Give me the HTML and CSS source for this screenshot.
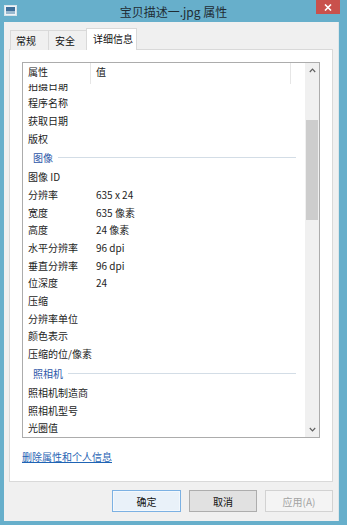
FILE: index.html
```html
<!DOCTYPE html>
<html lang="zh-CN">
<head>
<meta charset="utf-8">
<title>宝贝描述一.jpg 属性</title>
<link rel="stylesheet" href="styles.css">
</head>
<body>
<div class="window">
  <div class="titlebar">
    <div class="tb-left">
      <svg class="app-icon" width="13" height="11" viewBox="0 0 13 11">
        <rect x="0.5" y="0.5" width="12" height="10" fill="#eef4f8" stroke="#d8e4ea"/>
        <rect x="2" y="2" width="9" height="4" fill="#3f6f9a"/>
        <rect x="2" y="6" width="9" height="3" fill="#9ab9cf"/>
      </svg>
    </div>
    <div class="title">宝贝描述一.jpg 属性</div>
    <div class="tb-right">
      <div class="close">
        <svg width="8" height="7" viewBox="0 0 8 7"><path d="M1 0.5 L7 6.5 M7 0.5 L1 6.5" stroke="#fff" stroke-width="1.6"/></svg>
      </div>
    </div>
  </div>
  <div class="client">
    <div class="tabs">
      <div class="tab t1">常规</div>
      <div class="tab t2">安全</div>
      <div class="tab active">详细信息</div>
    </div>
    <div class="panel">
      <div class="listbox">
        <div class="listmain">
          <div class="lhead">
            <div class="hc c1">属性</div>
            <div class="hc c2">值</div>
            <div class="hc c3"></div>
          </div>
          <div class="lview">
            <div class="rows">
              <div class="row"><span class="k">拍摄日期</span><span class="v"></span></div>
              <div class="row"><span class="k">程序名称</span><span class="v"></span></div>
              <div class="row"><span class="k">获取日期</span><span class="v"></span></div>
              <div class="row"><span class="k">版权</span><span class="v"></span></div>
              <div class="sect"><span class="st">图像</span><span class="sl"></span></div>
              <div class="row"><span class="k">图像 ID</span><span class="v"></span></div>
              <div class="row"><span class="k">分辨率</span><span class="v">635 x 24</span></div>
              <div class="row"><span class="k">宽度</span><span class="v">635 像素</span></div>
              <div class="row"><span class="k">高度</span><span class="v">24 像素</span></div>
              <div class="row"><span class="k">水平分辨率</span><span class="v">96 dpi</span></div>
              <div class="row"><span class="k">垂直分辨率</span><span class="v">96 dpi</span></div>
              <div class="row"><span class="k">位深度</span><span class="v">24</span></div>
              <div class="row"><span class="k">压缩</span><span class="v"></span></div>
              <div class="row"><span class="k">分辨率单位</span><span class="v"></span></div>
              <div class="row"><span class="k">颜色表示</span><span class="v"></span></div>
              <div class="row"><span class="k">压缩的位/像素</span><span class="v"></span></div>
              <div class="sect"><span class="st">照相机</span><span class="sl"></span></div>
              <div class="row"><span class="k">照相机制造商</span><span class="v"></span></div>
              <div class="row"><span class="k">照相机型号</span><span class="v"></span></div>
              <div class="row"><span class="k">光圈值</span><span class="v"></span></div>
            </div>
          </div>
        </div>
        <div class="vscroll">
          <div class="arrow">
            <svg width="7" height="5" viewBox="0 0 7 5"><path d="M0.8 4 L3.5 1.2 L6.2 4" fill="none" stroke="#606060" stroke-width="1.2"/></svg>
          </div>
          <div class="track">
            <div class="thumb"></div>
          </div>
          <div class="arrow">
            <svg width="7" height="5" viewBox="0 0 7 5"><path d="M0.8 1 L3.5 3.8 L6.2 1" fill="none" stroke="#606060" stroke-width="1.2"/></svg>
          </div>
        </div>
      </div>
      <a class="link" href="#">删除属性和个人信息</a>
    </div>
    <div class="buttons">
      <div class="btn default">确定</div>
      <div class="btn">取消</div>
      <div class="btn disabled">应用(A)</div>
    </div>
  </div>
</div>
</body>
</html>
```

FILE: styles.css
```css
* { box-sizing: border-box; }
html, body {
  margin: 0;
  padding: 0;
}
body {
  width: 347px;
  height: 525px;
  overflow: hidden;
  background: #67afcb;
  font-family: "Noto Sans CJK SC", "Microsoft YaHei", "Noto Sans", sans-serif;
  font-size: 10px;
  color: #1a1a1a;
}
.window {
  width: 347px;
  height: 525px;
  display: flex;
  flex-direction: column;
}
.titlebar {
  height: 22px;
  display: grid;
  grid-template-columns: 1fr auto 1fr;
  align-items: start;
}
.tb-left {
  padding: 5px 0 0 4px;
  display: flex;
}
.app-icon { display: block; }
.title {
  font-size: 12px;
  line-height: 24px;
  color: #1f2c33;
  white-space: nowrap;
}
.tb-right {
  display: flex;
  justify-content: flex-end;
  padding-right: 7px;
}
.close {
  width: 24px;
  height: 14px;
  background: #c9514c;
  display: flex;
  align-items: center;
  justify-content: center;
}
.client {
  margin: 0 8px 4px 4px;
  height: 499px;
  background: #f0f0f0;
  border-right: 1px solid #dbe6ea;
  padding: 6px 5px 0 5px;
  display: flex;
  flex-direction: column;
}
.tabs {
  display: flex;
  align-items: flex-end;
  height: 22px;
  margin-bottom: -1px;
  padding-left: 1px;
  position: relative;
  z-index: 1;
}
.tab {
  height: 20px;
  border: 1px solid #d9d9d9;
  border-bottom: none;
  background: #f0f0f0;
  line-height: 19px;
  font-size: 10px;
  color: #111;
  margin-right: -1px;
}
.t1 { width: 39px; padding-left: 5px; }
.t2 { width: 39px; padding-left: 6px; }
.tab.active {
  height: 22px;
  width: 51px;
  background: #fff;
  padding-left: 6px;
  line-height: 19px;
}
.panel {
  height: 433px;
  background: #fff;
  border: 1px solid #d9d9d9;
  padding: 12px 12px 0 12px;
  display: flex;
  flex-direction: column;
}
.listbox {
  height: 376px;
  border: 1px solid #acacac;
  display: flex;
  background: #fff;
}
.listmain {
  flex: 1;
  display: flex;
  flex-direction: column;
  min-width: 0;
}
.lhead {
  height: 21px;
  display: flex;
  background: #fff;
}
.hc {
  line-height: 18px;
  font-size: 10px;
  color: #222;
  padding-left: 5px;
  border-right: 1px solid #e6e6e6;
}
.hc.c1 { width: 68px; }
.hc.c2 { width: 200px; }
.hc.c3 { flex: 1; border-right: none; }
.lview {
  flex: 1;
  overflow: hidden;
}
.rows {
  margin-top: -7.3px;
}
.row {
  height: 17.7px;
  display: flex;
  align-items: center;
  line-height: 14px;
  font-size: 10px;
  color: #1d1d1d;
}
.row .k {
  width: 68px;
  padding-left: 5px;
  white-space: nowrap;
}
.row .v {
  padding-left: 5px;
  white-space: nowrap;
}
.sect {
  height: 21px;
  display: flex;
  align-items: center;
  padding-left: 10px;
  padding-right: 9px;
}
.sect .st {
  color: #2d56a8;
  font-size: 10px;
  line-height: 14px;
  white-space: nowrap;
}
.sect .sl {
  flex: 1;
  height: 1px;
  background: #d3dde6;
  margin-left: 5px;
}
.vscroll {
  width: 14px;
  background: #f0f0f0;
  display: flex;
  flex-direction: column;
}
.arrow {
  height: 15px;
  display: flex;
  align-items: center;
  justify-content: center;
}
.track {
  flex: 1;
  padding: 0 1px;
}
.thumb {
  margin-top: 42px;
  height: 100px;
  background: #cdcdcd;
}
.link {
  margin-top: 12px;
  align-self: flex-start;
  font-size: 10px;
  line-height: 14px;
  color: #1f64b4;
  text-decoration: underline;
}
.buttons {
  display: flex;
  justify-content: flex-end;
  gap: 8px;
  margin-top: 8px;
}
.btn {
  width: 68px;
  height: 22px;
  border: 1px solid #adadad;
  background: #e1e1e1;
  display: flex;
  align-items: center;
  justify-content: center;
  font-size: 10px;
  color: #111;
}
.btn.default {
  width: 69px;
  border-color: #7cb1e3;
  background: #e9f1f9;
  box-shadow: inset 0 0 0 1px #f3f8fd;
}
.btn.disabled {
  background: #f4f4f4;
  border-color: #d2d2d2;
  color: #a3a3a3;
}
```
